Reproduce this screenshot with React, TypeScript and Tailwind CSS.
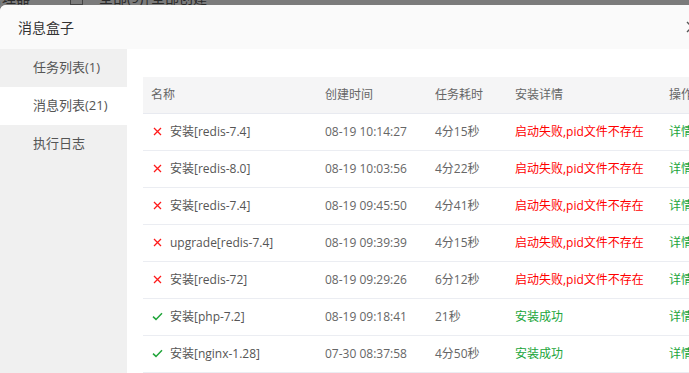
import React from "react";

type Row = {
  name: string;
  time: string;
  cost: string;
  ok: boolean;
  detail: string;
};

const rows: Row[] = [
  { name: "安装[redis-7.4]", time: "08-19 10:14:27", cost: "4分15秒", ok: false, detail: "启动失败,pid文件不存在" },
  { name: "安装[redis-8.0]", time: "08-19 10:03:56", cost: "4分22秒", ok: false, detail: "启动失败,pid文件不存在" },
  { name: "安装[redis-7.4]", time: "08-19 09:45:50", cost: "4分41秒", ok: false, detail: "启动失败,pid文件不存在" },
  { name: "upgrade[redis-7.4]", time: "08-19 09:39:39", cost: "4分15秒", ok: false, detail: "启动失败,pid文件不存在" },
  { name: "安装[redis-72]", time: "08-19 09:29:26", cost: "6分12秒", ok: false, detail: "启动失败,pid文件不存在" },
  { name: "安装[php-7.2]", time: "08-19 09:18:41", cost: "21秒", ok: true, detail: "安装成功" },
  { name: "安装[nginx-1.28]", time: "07-30 08:37:58", cost: "4分50秒", ok: true, detail: "安装成功" },
];

const tabs = ["任务列表(1)", "消息列表(21)", "执行日志"];

function StatusIcon({ ok }: { ok: boolean }) {
  if (ok) {
    return (
      <svg width="11" height="9" viewBox="0 0 11 9" className="shrink-0">
        <path d="M1 4.6 L4 7.4 L10 1.2" fill="none" stroke="#20a53a" strokeWidth="1.5" />
      </svg>
    );
  }
  return (
    <svg width="9" height="9" viewBox="0 0 9 9" className="shrink-0 ml-[1px] mr-[1px]">
      <path d="M1 1 L8 8 M8 1 L1 8" fill="none" stroke="#ff1a1a" strokeWidth="1.3" />
    </svg>
  );
}

export default function App() {
  return (
    <div
      className="w-[689px] h-[373px] overflow-hidden bg-[#7b7b7b] flex flex-col"
      style={{ fontFamily: '"Open Sans", "Noto Sans CJK SC", sans-serif' }}
    >
      {/* backdrop page peeking out on top */}
      <div className="h-[5px] overflow-hidden shrink-0">
        <div className="flex items-center gap-4 -mt-[9px] text-[14px] text-[#2a2a2a] leading-[14px]">
          <span className="-ml-[12px]">管理器</span>
          <span className="w-[13px] h-[13px] border border-[#444] ml-[24px]" />
          <span>全部(9)|全部创建</span>
        </div>
      </div>

      <div className="w-[720px] flex-1 bg-white rounded-tl-[6px] flex flex-col overflow-hidden">
        <div className="h-[44px] shrink-0 bg-[#fafafa] flex items-center justify-between pl-[18px] pr-[22px]">
          <span className="text-[14px] text-[#333]">消息盒子</span>
          <svg width="12" height="12" viewBox="0 0 12 12">
            <path d="M1 1 L11 11 M11 1 L1 11" fill="none" stroke="#555" strokeWidth="1.4" />
          </svg>
        </div>

        <div className="flex flex-1">
          <div className="w-[127px] shrink-0 bg-[#f0f0f0] flex flex-col">
            {tabs.map((t, i) => (
              <div
                key={t}
                className={
                  "h-[38px] flex items-center pl-[33px] text-[13px] text-[#555] " +
                  (i === 1 ? "bg-white" : "")
                }
              >
                {t}
              </div>
            ))}
          </div>

          <div className="flex-1 pl-[16px] pt-[28px] bg-white">
            <table className="w-[577px] border-collapse text-[12px] text-left">
              <thead>
                <tr className="bg-[#f5f5f6] h-[36px] border-b border-[#e8eaf0] text-[#666]">
                  <th className="font-normal pl-[8px] w-[174px]">名称</th>
                  <th className="font-normal pl-[8px] w-[110px]">创建时间</th>
                  <th className="font-normal pl-[8px] w-[80px]">任务耗时</th>
                  <th className="font-normal pl-[8px] w-[154px]">安装详情</th>
                  <th className="font-normal pl-[8px]">操作</th>
                </tr>
              </thead>
              <tbody>
                {rows.map((r, i) => (
                  <tr key={i} className="h-[37px] border-b border-[#ebedf2] text-[#666]">
                    <td className="pl-[9px]">
                      <div className="flex items-center gap-[7px]">
                        <StatusIcon ok={r.ok} />
                        <span className="text-[#555]">{r.name}</span>
                      </div>
                    </td>
                    <td className="pl-[8px]">{r.time}</td>
                    <td className="pl-[8px]">{r.cost}</td>
                    <td className={"pl-[8px] " + (r.ok ? "text-[#20a53a]" : "text-[#ff0000]")}>
                      {r.detail}
                    </td>
                    <td className="pl-[8px] text-[#20a53a]">详情</td>
                  </tr>
                ))}
              </tbody>
            </table>
          </div>
        </div>
      </div>
    </div>
  );
}
